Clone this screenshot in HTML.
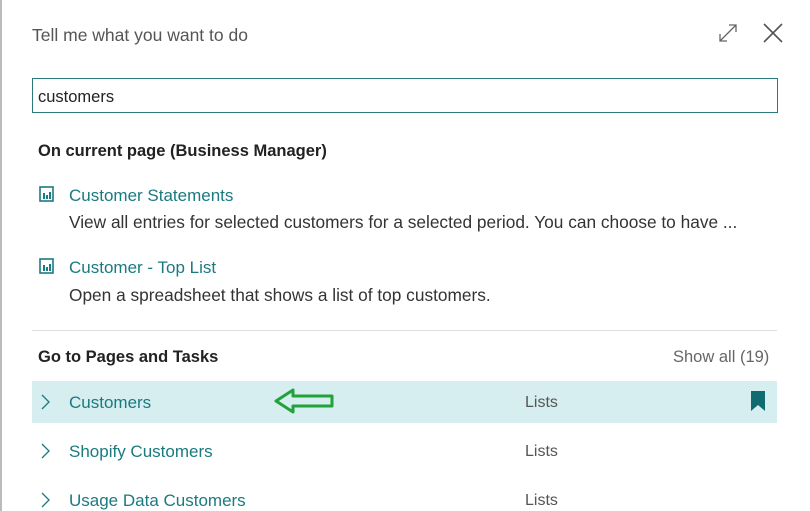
<!DOCTYPE html>
<html><head><style>
body{margin:0;width:810px;height:511px;overflow:hidden;background:#fff;font-family:"Liberation Sans",sans-serif;position:relative}
.a{position:absolute;white-space:nowrap}
.link{color:#1a7a80;font-size:17px}
.desc{color:#333;font-size:17.3px}
.lst{color:#555;font-size:16px}
</style></head><body>
<div class="a" style="left:0;top:0;width:2px;height:511px;background:#bbb"></div>
<div class="a" style="left:32px;top:25px;font-size:17.5px;color:#555">Tell me what you want to do</div>
<svg class="a" style="left:716px;top:22px" width="24" height="22" viewBox="0 0 24 22"><path d="M4 19L20 3M13 3h7v7M4 12v7h7" fill="none" stroke="#666" stroke-width="1.3"/></svg>
<svg class="a" style="left:762px;top:22px" width="22" height="22" viewBox="0 0 22 22"><path d="M2 2L20 20M20 2L2 20" stroke="#555" stroke-width="1.6"/></svg>
<div class="a" style="left:32px;top:78px;width:744px;height:33px;border:1px solid #2a7a80"></div>
<div class="a" style="left:38px;top:88px;font-size:16.5px;color:#222">customers</div>
<div class="a" style="left:38px;top:142px;font-size:16.5px;font-weight:bold;color:#222">On current page (Business Manager)</div>
<svg class="a" style="left:39px;top:186px" width="15" height="16" viewBox="0 0 15 16"><rect x="1" y="1" width="13" height="14" fill="none" stroke="#1a7a80" stroke-width="1.6"/><rect x="4" y="7" width="2" height="6" fill="#1a7a80"/><rect x="7" y="9" width="2" height="4" fill="#1a7a80"/><rect x="10" y="6" width="2" height="7" fill="#1a7a80"/></svg>
<div class="a link" style="left:69px;top:186px">Customer Statements</div>
<div class="a desc" style="left:69px;top:212px">View all entries for selected customers for a selected period. You can choose to have ...</div>
<svg class="a" style="left:39px;top:258px" width="15" height="16" viewBox="0 0 15 16"><rect x="1" y="1" width="13" height="14" fill="none" stroke="#1a7a80" stroke-width="1.6"/><rect x="4" y="7" width="2" height="6" fill="#1a7a80"/><rect x="7" y="9" width="2" height="4" fill="#1a7a80"/><rect x="10" y="6" width="2" height="7" fill="#1a7a80"/></svg>
<div class="a link" style="left:69px;top:258px">Customer - Top List</div>
<div class="a desc" style="left:69px;top:285px">Open a spreadsheet that shows a list of top customers.</div>
<div class="a" style="left:32px;top:330px;width:745px;height:1px;background:#ddd"></div>
<div class="a" style="left:38px;top:348px;font-size:16.5px;font-weight:bold;color:#222">Go to Pages and Tasks</div>
<div class="a" style="left:673px;top:348px;font-size:16.5px;color:#666">Show all (19)</div>
<div class="a" style="left:32px;top:381px;width:745px;height:42px;background:#d6eef0"></div>
<svg class="a" style="left:40px;top:393px" width="12" height="18" viewBox="0 0 12 18"><path d="M2 2l7 7-7 7" fill="none" stroke="#1a7a80" stroke-width="1.3"/></svg>
<div class="a link" style="left:69px;top:393px">Customers</div>
<svg class="a" style="left:273px;top:386px" width="64" height="30" viewBox="0 0 64 30"><path d="M3 15L20 4v6h39v10H20v6z" fill="none" stroke="#22a23a" stroke-width="3" stroke-linejoin="round"/></svg>
<div class="a lst" style="left:525px;top:394px">Lists</div>
<svg class="a" style="left:751px;top:391px" width="14" height="20" viewBox="0 0 14 20"><path d="M0 0h14v20L7 14 0 20z" fill="#0f6b6f"/></svg>
<svg class="a" style="left:40px;top:442px" width="12" height="18" viewBox="0 0 12 18"><path d="M2 2l7 7-7 7" fill="none" stroke="#1a7a80" stroke-width="1.3"/></svg>
<div class="a link" style="left:69px;top:442px">Shopify Customers</div>
<div class="a lst" style="left:525px;top:443px">Lists</div>
<svg class="a" style="left:40px;top:491px" width="12" height="18" viewBox="0 0 12 18"><path d="M2 2l7 7-7 7" fill="none" stroke="#1a7a80" stroke-width="1.3"/></svg>
<div class="a link" style="left:69px;top:491px">Usage Data Customers</div>
<div class="a lst" style="left:525px;top:492px">Lists</div>
</body></html>
